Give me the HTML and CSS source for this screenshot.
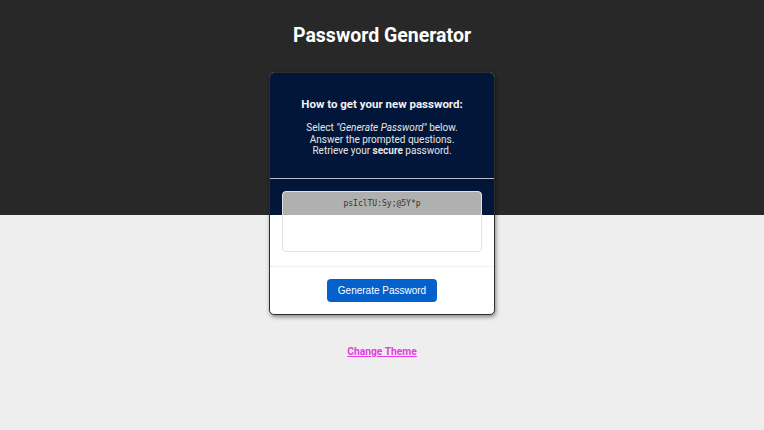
FILE: index.html
```html
<!DOCTYPE html>
<html lang="en">
<head>
  <meta charset="UTF-8">
  <meta name="viewport" content="width=device-width, initial-scale=1.0">
  <title>Password Generator</title>
  <link rel="stylesheet" href="styles.css">
</head>
<body>
  <div class="wrapper">
    <h1>Password Generator</h1>

    <div class="card">
      <div class="card-header">
        <h2>How to get your new password:</h2>
        <p>Select <em>"Generate Password"</em> below.<br>
        Answer the prompted questions.<br>
        Retrieve your <strong>secure</strong> password.</p>
      </div>
      <div class="card-body">
        <textarea id="password" readonly>psIclTU:Sy;@5Y*p</textarea>
      </div>
      <div class="card-footer">
        <button id="generate" class="btn">Generate Password</button>
      </div>
    </div>

    <a href="#" class="theme-link">Change Theme</a>
  </div>
</body>
</html>
```

FILE: styles.css
```css
/* General */
html, body {
  height: 100%;
}

body {
  margin: 0;
  font-family: 'Roboto', 'Liberation Sans', sans-serif;
  background: linear-gradient(to bottom, #282828 50%, #eeeeee 50%);
  color: #fff;
}

.wrapper {
  display: flex;
  flex-direction: column;
  align-items: center;
  padding-top: 24px;
}

h1 {
  margin: 0 0 24px;
  font-size: 19.5px;
  font-weight: 700;
  line-height: 24px;
}

/* Card */
.card {
  width: 224px;
  border: 1px solid #2e2e2e;
  border-radius: 5px;
  background: #fff;
  box-shadow: 1px 2px 4px rgba(0, 0, 0, 0.45);
  overflow: hidden;
}

.card-header {
  background: #02163a;
  text-align: center;
  padding: 24px 8px 21px;
  border-bottom: 1px solid #b8bcc6;
}

.card-header h2 {
  margin: 0 0 11px;
  font-size: 11.5px;
  line-height: 14px;
  font-weight: 700;
  color: #f2f2f2;
}

.card-header p {
  margin: 0;
  font-size: 10px;
  line-height: 11.5px;
  color: #e6e6e6;
}

.card-body {
  padding: 12px 12px 14px;
  background: #fff linear-gradient(to bottom, #02163a 36px, #fff 36px) no-repeat;
  border-bottom: 1px dotted #e4e4e4;
}

.card-body textarea {
  display: block;
  box-sizing: border-box;
  width: 100%;
  height: 61px;
  padding: 7px 6px;
  border: 1px solid #e2e2e2;
  border-radius: 4px;
  background: #fff linear-gradient(to bottom, #b0b0b0 23px, #fff 23px) no-repeat;
  font-family: 'DejaVu Sans Mono', monospace;
  font-size: 8px;
  color: #333;
  text-align: center;
  resize: none;
  outline: none;
}

.card-footer {
  display: flex;
  justify-content: center;
  padding: 12px 0 12px;
}

.btn {
  width: 110px;
  height: 23px;
  border: none;
  border-radius: 4px;
  background: #0460cb;
  color: #fff;
  font-family: 'Liberation Sans', Arial, sans-serif;
  font-size: 10px;
  cursor: pointer;
}

/* Theme toggle */
.theme-link {
  margin-top: 30px;
  font-size: 10.3px;
  font-weight: 700;
  color: #e43de4;
}
```
